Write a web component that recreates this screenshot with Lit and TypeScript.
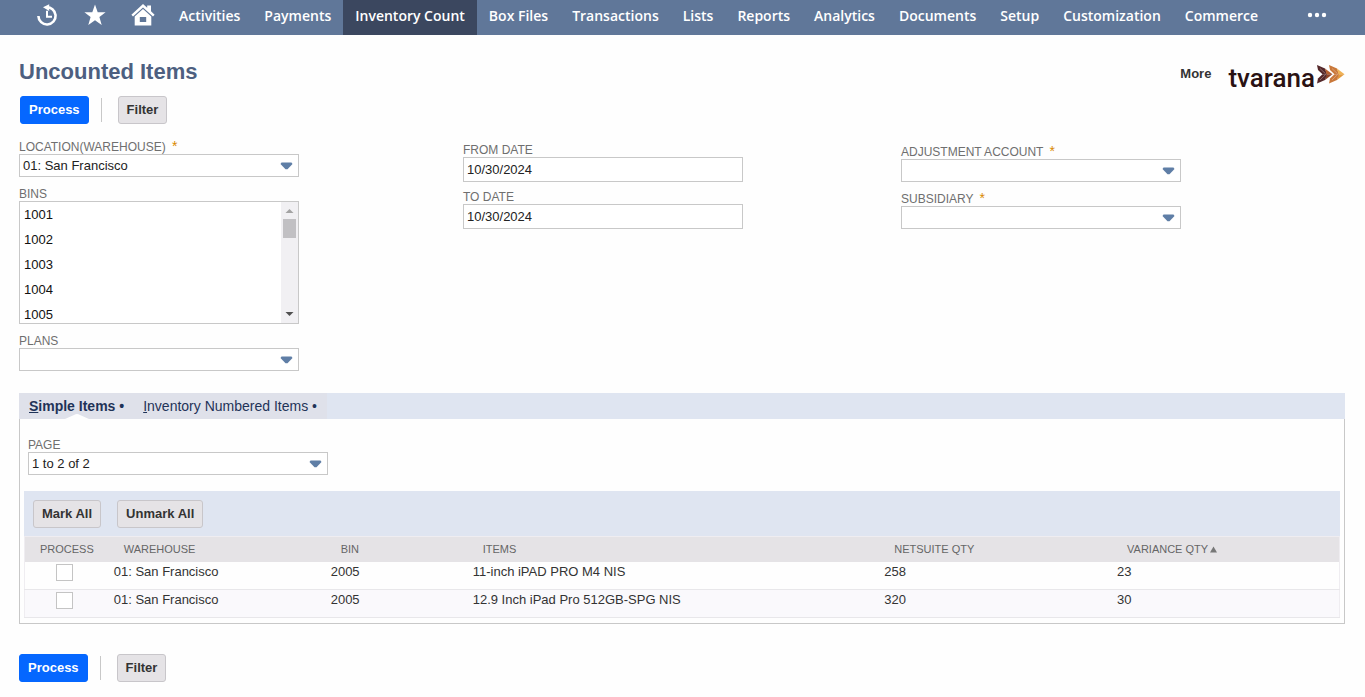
import { LitElement, html, css, svg } from "lit";
import { customElement, property, state } from "lit/decorators.js";
import { classMap } from "lit/directives/class-map.js";

const MENU = [
  "Activities", "Payments", "Inventory Count", "Box Files", "Transactions", "Lists", "Reports",
  "Analytics", "Documents", "Setup", "Customization", "Commerce",
];

const BINS = ["1001", "1002", "1003", "1004", "1005"];

const ROWS = [
  { warehouse: "01: San Francisco", bin: "2005", item: "11-inch iPAD PRO M4 NIS", qty: 258, variance: 23 },
  { warehouse: "01: San Francisco", bin: "2005", item: "12.9 Inch iPad Pro 512GB-SPG NIS", qty: 320, variance: 30 },
];

const buttons = css`
  button.btn {
    box-sizing: border-box;
    height: 28px;
    padding: 0 8px;
    font: bold 13px/16px "Liberation Sans", Arial, sans-serif;
    color: #333;
    background: #e5e3e6;
    border: 1px solid #c8c6ca;
    border-radius: 3px;
    cursor: pointer;
  }
  button.primary {
    color: #fff;
    background: #0567ff;
    border-color: #0567ff;
  }
`;

@customElement("nav-bar")
export class NavBar extends LitElement {
  @property() active = "";

  static styles = css`
    :host {
      display: block;
      background: #607799;
      font: 600 14px/32px "Open Sans", sans-serif;
    }
    nav {
      display: flex;
      height: 35px;
      padding-left: 23px;
    }
    a {
      padding: 0 12px;
      color: #fff;
      text-decoration: none;
      white-space: nowrap;
    }
    a.active {
      background: #3b475f;
    }
    a.icon {
      display: flex;
      justify-content: center;
      width: 24px;
      padding-top: 3px;
    }
    a.more {
      margin-left: auto;
      padding: 3px 36px 0;
    }
    svg {
      display: block;
      fill: #fff;
    }
  `;

  render() {
    return html`<nav aria-label="Main">
      <a class="icon" href="#recent" aria-label="Recent records">
        <svg width="24" height="24" viewBox="0 0 24 24">
          <path d="M11 4.300A8.600 8.600 0 1 1 3.400 13" fill="none" stroke="#fff" stroke-width="2.600" />
          <path d="M14.200 1.200V8L8 4.300z" />
          <path d="M12 7.800V13.800H17" fill="none" stroke="#fff" stroke-width="2" />
        </svg>
      </a>
      <a class="icon" href="#shortcuts" aria-label="Shortcuts">
        <svg width="24" height="24" viewBox="0 0 24 24">
          <path d="M12 1.600L14.700 9.300H22.600L16.400 14.100L18.700 22L12 17.300L5.300 22L7.600 14.100L1.400 9.300H9.300z" />
        </svg>
      </a>
      <a class="icon" href="#home" aria-label="Home">
        <svg width="24" height="24" viewBox="0 0 24 24">
          <path d="M12 1L16.200 4.800V2.400H20V8.300L23.600 11.700L22 13.400L12 4.400L2 13.400L.4 11.700z" />
          <path fill-rule="evenodd" d="M12 5.900L20.300 13.400V22.500H3.700V13.400zM8.800 14V19H15.200V14z" />
        </svg>
      </a>
      ${MENU.map((m) => html`<a href="#${m}" class=${classMap({ active: m === this.active })}>${m}</a>`)}
      <a class="more" href="#all" aria-label="More menus">
        <svg width="24" height="24" viewBox="0 0 24 24">
          <circle cx="4" cy="12" r="2.200" /><circle cx="11" cy="12" r="2.200" /><circle cx="18" cy="12" r="2.200" />
        </svg>
      </a>
    </nav>`;
  }
}

@customElement("action-bar")
export class ActionBar extends LitElement {
  static styles = [
    buttons,
    css`
      :host {
        display: flex;
        align-items: center;
      }
      .rule {
        width: 1px;
        height: 24px;
        margin: 0 16px 0 12px;
        background: #c8c8c8;
      }
    `,
  ];

  render() {
    return html`<button class="btn primary">Process</button>
      <span class="rule"></span>
      <button class="btn">Filter</button>`;
  }
}

@customElement("form-field")
export class FormField extends LitElement {
  @property() label = "";
  @property() kind: "select" | "text" | "list" = "select";
  @property() value = "";
  @property({ type: Boolean }) required = false;

  static styles = css`
    :host {
      display: block;
      font: 13px/16px "Liberation Sans", Arial, sans-serif;
      color: #222;
    }
    label {
      display: block;
      height: 15px;
      font-size: 12px;
      line-height: 16px;
      color: #6f6f6f;
      white-space: nowrap;
    }
    .star {
      margin-left: 3px;
      font-size: 14px;
      line-height: 12px;
      color: #d98a00;
    }
    .box {
      display: grid;
      grid-template-columns: 1fr;
      align-items: center;
    }
    .box > * {
      grid-area: 1 / 1;
    }
    .box svg {
      justify-self: end;
      margin-right: 6px;
      fill: #5f7ea6;
      pointer-events: none;
    }
    select,
    input {
      box-sizing: border-box;
      width: 100%;
      margin: 0;
      padding: 0 3px;
      font: inherit;
      color: inherit;
      background: #fff;
      border: 1px solid #c8c8c8;
      border-radius: 0;
      appearance: none;
    }
    select {
      height: 23px;
    }
    input {
      height: 25px;
    }
    .list {
      display: flex;
      height: 121px;
      background: #fff;
      border: 1px solid #c8c8c8;
    }
    .list select {
      flex: 1;
      height: auto;
      padding: 0;
      border: 0;
      overflow: hidden;
      outline: 0;
    }
    option {
      color: #111;
    }
    .list option {
      min-height: 0;
      padding: 5px 4px;
    }
    .scroll {
      display: flex;
      flex-direction: column;
      align-items: center;
      width: 17px;
      background: #f1f0f3;
    }
    .thumb {
      width: 13px;
      height: 19px;
      margin-bottom: auto;
      background: #c1c0c3;
    }
  `;

  private control() {
    if (this.kind === "text") return html`<input id="c" type="text" .value=${this.value} />`;
    if (this.kind === "list")
      return html`<div class="list">
        <select id="c" multiple size="5">${BINS.map((b) => html`<option>${b}</option>`)}</select>
        <div class="scroll" aria-hidden="true">
          <svg width="17" height="17" viewBox="0 0 17 17"><path d="M4.500 11L8.500 7L12.500 11z" fill="#a3a3a3" /></svg>
          <span class="thumb"></span>
          <svg width="17" height="17" viewBox="0 0 17 17"><path d="M4.500 6L8.500 10L12.500 6z" fill="#505050" /></svg>
        </div>
      </div>`;
    return html`<div class="box">
      <select id="c"><option>${this.value}</option></select>
      <svg width="13" height="8" viewBox="0 0 13 8"><path d="M1.500 .5H11.500L12.500 2L7.500 7.300H5.500L.5 2z" /></svg>
    </div>`;
  }

  render() {
    return html`<label for="c">${this.label}${this.required ? html` <span class="star">*</span>` : ""}</label>
      ${this.control()}`;
  }
}

@customElement("item-table")
export class ItemTable extends LitElement {
  @state() private checked = ROWS.map(() => false);

  static styles = [
    buttons,
    css`
      :host {
        display: block;
        font: 13px/16px "Liberation Sans", Arial, sans-serif;
        color: #333;
      }
      .tools {
        display: flex;
        gap: 16px;
        padding: 9px 9px 8px;
        background: #dfe5f1;
      }
      table {
        width: 100%;
        table-layout: fixed;
        border-collapse: collapse;
        border: 1px solid #efedf1;
      }
      th {
        height: 23px;
        padding: 0 0 2px 19px;
        font-size: 11px;
        font-weight: normal;
        text-align: left;
        white-space: nowrap;
        color: #666;
        background: #e5e3e6;
      }
      th:first-child {
        padding-left: 15px;
      }
      td {
        height: 25px;
        padding: 2px 0 0 9px;
        vertical-align: top;
        border-bottom: 1px solid #e8e7ea;
      }
      td:first-child {
        padding: 2px 0 0;
        text-align: center;
      }
      tbody tr:nth-child(even) {
        background: #faf9fc;
      }
      input {
        display: block;
        box-sizing: border-box;
        width: 17px;
        height: 17px;
        margin: 0 auto;
        appearance: none;
        background: #fff;
        border: 1px solid #c4c4c4;
      }
      input:checked {
        background: #607799;
      }
      .c1 { width: 6.1%; }
      .c2 { width: 16.5%; }
      .c3 { width: 10.8%; }
      .c4 { width: 31.3%; }
      .c5 { width: 17.7%; }
    `,
  ];

  private mark(value: boolean) {
    this.checked = ROWS.map(() => value);
  }

  render() {
    return html`<div class="tools">
        <button class="btn" @click=${() => this.mark(true)}>Mark All</button>
        <button class="btn" @click=${() => this.mark(false)}>Unmark All</button>
      </div>
      <table>
        <colgroup>
          <col class="c1" /><col class="c2" /><col class="c3" /><col class="c4" /><col class="c5" /><col />
        </colgroup>
        <thead>
          <tr>
            <th>PROCESS</th><th>WAREHOUSE</th><th>BIN</th><th>ITEMS</th><th>NETSUITE QTY</th>
            <th aria-sort="ascending">VARIANCE QTY<svg width="9" height="7" viewBox="0 0 9 7"><path d="M2 6.500L5.500 .5L9 6.500z" fill="#777" /></svg></th>
          </tr>
        </thead>
        <tbody>
          ${ROWS.map(
            (r, i) => html`<tr>
              <td><input type="checkbox" aria-label="Process ${r.item}" .checked=${this.checked[i]} /></td>
              <td>${r.warehouse}</td><td>${r.bin}</td><td>${r.item}</td><td>${r.qty}</td><td>${r.variance}</td>
            </tr>`,
          )}
        </tbody>
      </table>`;
  }
}

const arrow = (x: number, dark: string, mid: string, light: string) => svg`
  <g transform="translate(${x} 0)">
    <path d="M0 0L8 3.500L10 9.200H5.500L1 5z" fill=${dark} />
    <path d="M8 3.500L15.500 9.200H9.500z" fill=${light} />
    <path d="M15.500 9.200L8 15L9.500 9.200z" fill=${mid} />
    <path d="M0 18.500L1 13.500L5.500 9.200H10L8 15z" fill=${dark} />
    <path d="M3 3.500L8.500 8.700M3 15L8.500 9.700" stroke="#f6e3d8" stroke-width=".6" opacity=".6" />
  </g>`;

@customElement("app-root")
export class AppRoot extends LitElement {
  static styles = css`
    :host {
      display: block;
      min-height: 100vh;
      background: #fefefe;
      font: 13px/16px "Liberation Sans", Arial, sans-serif;
      color: #333;
    }
    main {
      padding: 20px 20px 14px 19px;
    }
    header {
      display: flex;
      align-items: center;
      height: 34px;
    }
    h1 {
      margin: 0 auto 0 0;
      font-size: 22px;
      line-height: 26px;
      color: #4d5f80;
    }
    .more {
      margin: 4px 17px 0 0;
      font-weight: bold;
      color: #333;
      text-decoration: none;
    }
    .logo {
      display: flex;
      align-items: flex-start;
      gap: 2px;
      padding-top: 12px;
      font: 500 26px/32px Roboto, sans-serif;
      color: #2a1213;
    }
    .top {
      margin: 7px 0 15px 1px;
    }
    .form {
      display: grid;
      grid-template-columns: 444fr 438fr 444fr;
      align-items: start;
    }
    .col {
      display: grid;
      grid-template-columns: minmax(0, 280px);
      gap: 9px;
    }
    .dates {
      gap: 7px;
      padding-top: 3px;
    }
    .account {
      padding-top: 5px;
    }
    .tabs {
      display: flex;
      margin-top: 22px;
      background: #dfe5f1;
    }
    .tabs a {
      padding: 0 10px;
      font-size: 14px;
      line-height: 26px;
      color: #1f3358;
      text-decoration: none;
      background: #dfe1ea;
    }
    .tabs a.on {
      display: grid;
      padding-right: 9px;
      font-weight: bold;
    }
    .tabs a.on > * {
      grid-area: 1 / 1;
    }
    .tabs svg {
      place-self: end center;
      fill: #fefefe;
    }
    .panel {
      padding: 18px 4px 5px;
      border: 1px solid #c8c8c8;
      border-top: 0;
    }
    .page {
      max-width: 300px;
      margin: 0 0 16px 4px;
    }
    .bottom {
      margin-top: 30px;
    }
  `;

  render() {
    return html`<nav-bar active="Inventory Count"></nav-bar>
      <main>
        <header>
          <h1>Uncounted Items</h1>
          <a class="more" href="#more">More</a>
          <div class="logo">
            <span>tvarana</span>
            <svg width="28" height="23" viewBox="0 -3 28 23">
              ${arrow(0, "#54282a", "#8f4527", "#b5602f")}${arrow(12, "#c9783a", "#e39a3c", "#f0b254")}
            </svg>
          </div>
        </header>
        <action-bar class="top"></action-bar>
        <div class="form">
          <div class="col">
            <form-field label="LOCATION(WAREHOUSE)" value="01: San Francisco" required></form-field>
            <form-field label="BINS" kind="list"></form-field>
            <form-field label="PLANS"></form-field>
          </div>
          <div class="col dates">
            <form-field label="FROM DATE" kind="text" value="10/30/2024"></form-field>
            <form-field label="TO DATE" kind="text" value="10/30/2024"></form-field>
          </div>
          <div class="col account">
            <form-field label="ADJUSTMENT ACCOUNT" required></form-field>
            <form-field label="SUBSIDIARY" required></form-field>
          </div>
        </div>
        <div class="tabs">
          <a class="on" href="#simple">
            <span><u>S</u>imple Items •</span>
            <svg width="24" height="5" viewBox="0 0 24 5"><path d="M0 5L9 1Q12 -1 15 1L24 5z" /></svg>
          </a>
          <a href="#numbered"><u>I</u>nventory Numbered Items •</a>
        </div>
        <section class="panel">
          <form-field class="page" label="PAGE" value="1 to 2 of 2"></form-field>
          <item-table></item-table>
        </section>
        <action-bar class="bottom"></action-bar>
      </main>`;
  }
}
